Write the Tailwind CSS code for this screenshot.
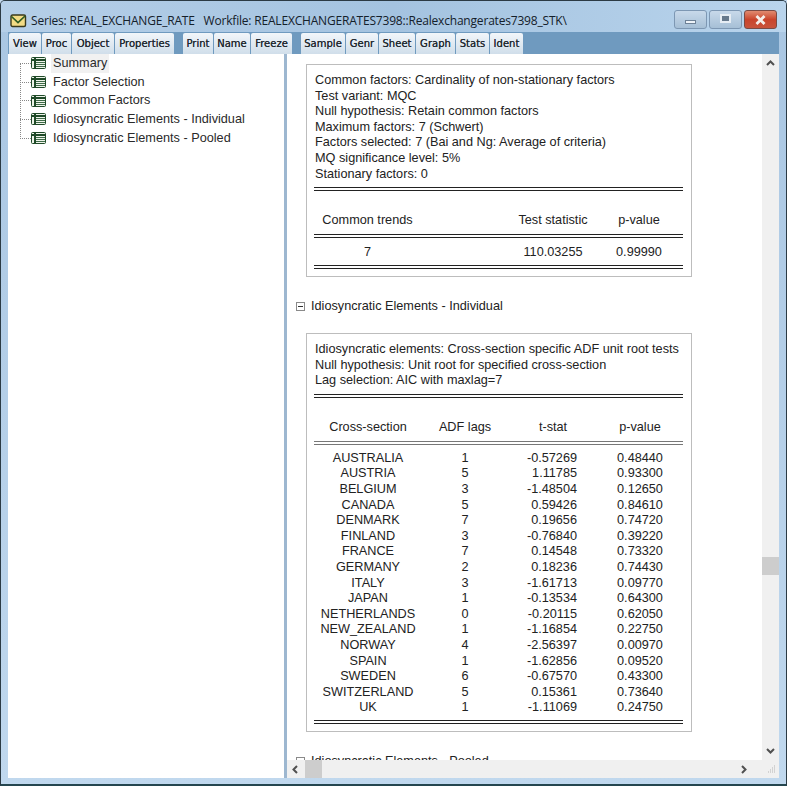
<!DOCTYPE html>
<html lang="en">
<head>
  <meta charset="UTF-8" />
  <title>Series: REAL_EXCHANGE_RATE</title>
  <script src="https://cdn.jsdelivr.net/npm/@tailwindcss/browser@4"></script>
</head>
<body class="w-[787px] h-[786px] overflow-hidden bg-[#c3d9ee] font-['Liberation_Sans',sans-serif] text-[12.7px] text-[#222]">

  <!-- window -->
  <div class="w-[787px] h-[786px] flex flex-col border-t border-x border-[#2b3a44] border-b-2 border-b-[#25464f] rounded-t-[5px] bg-gradient-to-b from-[#a9c6e2] to-[#c0d8ee] overflow-hidden">

    <!-- title bar -->
    <div class="h-[31px] flex shrink-0 items-center pl-[9px] pr-[9px] bg-gradient-to-r from-[#b5cfe8] via-[#a4c3e0] to-[#b9d4ec]">
      <svg width="17" height="14" viewBox="0 0 17 14" class="shrink-0 mt-[9px]">
        <rect x="1" y="1" width="14.500" height="11.500" rx="1.500" fill="#f3dc85" stroke="#3a3a1c" stroke-width="1.400"/>
        <path d="M1.500 2.500L8 8.500 15 2" fill="none" stroke="#2f5c23" stroke-width="1.700"/>
      </svg>
      <div class="ml-[4px] mt-[9px] font-['Open_Sans',sans-serif] text-[12px] tracking-[-0.19px] whitespace-pre text-[#14202a]">Series: REAL_EXCHANGE_RATE   Workfile: REALEXCHANGERATES7398::Realexchangerates7398_STK\</div>
      <div class="ml-auto flex mt-[6px] gap-[2px]">
        <div class="w-[33px] h-[19px] flex items-center justify-center rounded-[3px] border border-[#7d97b3] bg-gradient-to-b from-[#c8d9ea] to-[#a6bfd6]">
          <div class="w-[11px] h-[4px] mt-[5px] bg-[#eef3f8] border border-[#6d8196]"></div>
        </div>
        <div class="w-[33px] h-[19px] flex items-center justify-center rounded-[3px] border border-[#7d97b3] bg-gradient-to-b from-[#c8d9ea] to-[#a6bfd6]">
          <div class="w-[11px] h-[9px] mb-[2px] border-2 border-[#e6edf4] bg-[#66798c]"></div>
        </div>
        <div class="w-[33px] h-[19px] flex items-center justify-center rounded-[3px] border border-[#7a4a44] bg-gradient-to-b from-[#e08a70] via-[#c9442c] to-[#c8533c]">
          <svg width="13" height="10" viewBox="0 0 13 10"><path d="M2.500 1l8 8M10.500 1l-8 8" stroke="#f4efec" stroke-width="2.800"/></svg>
        </div>
      </div>
    </div>

    <!-- toolbar -->
    <div class="h-[22px] shrink-0 mx-[7px] bg-[#6f9abf] flex items-end gap-[1px] font-['DejaVu_Sans',sans-serif] text-[10px] tracking-[0.02px] text-[#1f2a33] leading-none [text-shadow:0_0_0.6px_#333] [&>span]:h-[21px] [&>span]:flex [&>span]:items-center [&>span]:justify-center [&>span]:rounded-t-[2px] [&>span]:bg-gradient-to-b [&>span]:from-[#f2f6fa] [&>span]:to-[#d0deea]">
      <span class="w-[32px] ml-[1px]">View</span>
      <span class="w-[29px]">Proc</span>
      <span class="w-[42px]">Object</span>
      <span class="w-[59px]">Properties</span>
      <span class="w-[30px] ml-[8px]">Print</span>
      <span class="w-[36px]">Name</span>
      <span class="w-[41px]">Freeze</span>
      <span class="w-[44px] ml-[8px]">Sample</span>
      <span class="w-[32px]">Genr</span>
      <span class="w-[36px]">Sheet</span>
      <span class="w-[39px]">Graph</span>
      <span class="w-[33px]">Stats</span>
      <span class="w-[33px]">Ident</span>
    </div>

    <!-- panes -->
    <div class="flex-1 min-h-0 flex mx-[7px] mb-[6px]">

      <!-- tree -->
      <div class="w-[279px] shrink-0 bg-white pl-[12px] border-r-[3px] border-[#9db7d0]">
        <div class="relative flex flex-col text-[#2a2a2a]">
          <div class="absolute left-0 top-[10px] h-[75px] border-l border-dotted border-[#888]"></div>
          <div class="h-[18.7px] flex items-center"><span class="w-[11px] border-t border-dotted border-[#888]"></span><svg width="15" height="12" viewBox="0 0 15 12"><rect x="0.500" y="0.500" width="14" height="11" rx="1" fill="#eef4ea" stroke="#1f4a28"/><path d="M0 3h15" stroke="#1f4a28" stroke-width="2"/><path d="M4 0v12" stroke="#1f4a28" stroke-width="2"/><path d="M5 5.500h9M5 7.500h9M5 9.500h9" stroke="#3f6b48"/></svg><span class="ml-[5px] px-[2px] bg-[#f1f1f1]">Summary</span></div>
          <div class="h-[18.7px] flex items-center"><span class="w-[11px] border-t border-dotted border-[#888]"></span><svg width="15" height="12" viewBox="0 0 15 12"><rect x="0.500" y="0.500" width="14" height="11" rx="1" fill="#eef4ea" stroke="#1f4a28"/><path d="M0 3h15" stroke="#1f4a28" stroke-width="2"/><path d="M4 0v12" stroke="#1f4a28" stroke-width="2"/><path d="M5 5.500h9M5 7.500h9M5 9.500h9" stroke="#3f6b48"/></svg><span class="ml-[7px]">Factor Selection</span></div>
          <div class="h-[18.7px] flex items-center"><span class="w-[11px] border-t border-dotted border-[#888]"></span><svg width="15" height="12" viewBox="0 0 15 12"><rect x="0.500" y="0.500" width="14" height="11" rx="1" fill="#eef4ea" stroke="#1f4a28"/><path d="M0 3h15" stroke="#1f4a28" stroke-width="2"/><path d="M4 0v12" stroke="#1f4a28" stroke-width="2"/><path d="M5 5.500h9M5 7.500h9M5 9.500h9" stroke="#3f6b48"/></svg><span class="ml-[7px]">Common Factors</span></div>
          <div class="h-[18.7px] flex items-center"><span class="w-[11px] border-t border-dotted border-[#888]"></span><svg width="15" height="12" viewBox="0 0 15 12"><rect x="0.500" y="0.500" width="14" height="11" rx="1" fill="#eef4ea" stroke="#1f4a28"/><path d="M0 3h15" stroke="#1f4a28" stroke-width="2"/><path d="M4 0v12" stroke="#1f4a28" stroke-width="2"/><path d="M5 5.500h9M5 7.500h9M5 9.500h9" stroke="#3f6b48"/></svg><span class="ml-[7px]">Idiosyncratic Elements - Individual</span></div>
          <div class="h-[18.7px] flex items-center"><span class="w-[11px] border-t border-dotted border-[#888]"></span><svg width="15" height="12" viewBox="0 0 15 12"><rect x="0.500" y="0.500" width="14" height="11" rx="1" fill="#eef4ea" stroke="#1f4a28"/><path d="M0 3h15" stroke="#1f4a28" stroke-width="2"/><path d="M4 0v12" stroke="#1f4a28" stroke-width="2"/><path d="M5 5.500h9M5 7.500h9M5 9.500h9" stroke="#3f6b48"/></svg><span class="ml-[7px]">Idiosyncratic Elements - Pooled</span></div>
        </div>
      </div>

      <!-- report -->
      <div class="flex-1 min-w-0 bg-white flex flex-col">
        <div class="flex-1 min-h-0 flex">
          <div class="flex-1 min-w-0 overflow-hidden pl-[19px] pt-[10px]">

            <div class="w-[386px] h-[213px] border border-[#bdbdbd] pl-[7px] pr-[8px] pt-[8px] leading-[15.6px]">
              <div class="pl-[1px]">Common factors: Cardinality of non-stationary factors</div>
              <div class="pl-[1px]">Test variant: MQC</div>
              <div class="pl-[1px]">Null hypothesis: Retain common factors</div>
              <div class="pl-[1px]">Maximum factors: 7 (Schwert)</div>
              <div class="pl-[1px]">Factors selected: 7 (Bai and Ng: Average of criteria)</div>
              <div class="pl-[1px]">MQ significance level: 5%</div>
              <div class="pl-[1px]">Stationary factors: 0</div>
              <div class="h-[4px] mt-[5px] border-y border-[#222]"></div>
              <div class="flex mt-[22px] h-[16px] items-center">
                <div class="w-[107px] text-center">Common trends</div>
                <div class="w-[100px] ml-[82px] text-center">Test statistic</div>
                <div class="w-[72px] text-center">p-value</div>
              </div>
              <div class="h-[4px] mt-[5px] border-y border-[#222]"></div>
              <div class="flex mt-[7px] h-[16px] items-center">
                <div class="w-[107px] text-center">7</div>
                <div class="w-[100px] ml-[82px] text-center">110.03255</div>
                <div class="w-[72px] text-center">0.99990</div>
              </div>
              <div class="h-[4px] mt-[4px] border-y border-[#222]"></div>
            </div>

            <div class="flex items-center h-[16px] mt-[21px] -ml-[10px]">
              <svg width="9" height="9" viewBox="0 0 9 9" class="shrink-0"><rect x="0.500" y="0.500" width="8" height="8" fill="#fff" stroke="#8a8a8a"/><path d="M2 4.500h5" stroke="#333"/></svg>
              <span class="ml-[6px] pt-[2px]">Idiosyncratic Elements - Individual</span>
            </div>

            <div class="w-[386px] h-[399px] mt-[19px] border border-[#bdbdbd] pl-[7px] pr-[8px] pt-[8px] leading-[15.6px]">
              <div class="pl-[1px] whitespace-nowrap">Idiosyncratic elements: Cross-section specific ADF unit root tests</div>
              <div class="pl-[1px]">Null hypothesis: Unit root for specified cross-section</div>
              <div class="pl-[1px]">Lag selection: AIC with maxlag=7</div>
              <div class="h-[4px] mt-[5px] border-y border-[#222]"></div>
              <div class="flex mt-[22px] h-[16px] items-center">
                <div class="w-[108px] text-center">Cross-section</div>
                <div class="w-[86px] text-center">ADF lags</div>
                <div class="w-[90px] text-center">t-stat</div>
                <div class="w-[84px] text-center">p-value</div>
              </div>
              <div class="h-[4px] mt-[5px] border-y border-[#777]"></div>
              <table class="mt-[6px] w-[368px] table-fixed border-collapse text-center [&_td]:p-0 [&_td]:h-[15.6px] [&_td]:leading-[15.6px] [&_td:nth-child(3)]:text-right [&_td:nth-child(3)]:pr-[21px]">
                <colgroup><col class="w-[108px]"><col class="w-[86px]"><col class="w-[90px]"><col class="w-[84px]"></colgroup>
                <tbody>
                  <tr><td>AUSTRALIA</td><td>1</td><td>-0.57269</td><td>0.48440</td></tr>
                  <tr><td>AUSTRIA</td><td>5</td><td>1.11785</td><td>0.93300</td></tr>
                  <tr><td>BELGIUM</td><td>3</td><td>-1.48504</td><td>0.12650</td></tr>
                  <tr><td>CANADA</td><td>5</td><td>0.59426</td><td>0.84610</td></tr>
                  <tr><td>DENMARK</td><td>7</td><td>0.19656</td><td>0.74720</td></tr>
                  <tr><td>FINLAND</td><td>3</td><td>-0.76840</td><td>0.39220</td></tr>
                  <tr><td>FRANCE</td><td>7</td><td>0.14548</td><td>0.73320</td></tr>
                  <tr><td>GERMANY</td><td>2</td><td>0.18236</td><td>0.74430</td></tr>
                  <tr><td>ITALY</td><td>3</td><td>-1.61713</td><td>0.09770</td></tr>
                  <tr><td>JAPAN</td><td>1</td><td>-0.13534</td><td>0.64300</td></tr>
                  <tr><td>NETHERLANDS</td><td>0</td><td>-0.20115</td><td>0.62050</td></tr>
                  <tr><td>NEW_ZEALAND</td><td>1</td><td>-1.16854</td><td>0.22750</td></tr>
                  <tr><td>NORWAY</td><td>4</td><td>-2.56397</td><td>0.00970</td></tr>
                  <tr><td>SPAIN</td><td>1</td><td>-1.62856</td><td>0.09520</td></tr>
                  <tr><td>SWEDEN</td><td>6</td><td>-0.67570</td><td>0.43300</td></tr>
                  <tr><td>SWITZERLAND</td><td>5</td><td>0.15361</td><td>0.73640</td></tr>
                  <tr><td>UK</td><td>1</td><td>-1.11069</td><td>0.24750</td></tr>
                </tbody>
              </table>
              <div class="h-[4px] mt-[4px] border-y border-[#222]"></div>
            </div>

            <div class="flex items-center h-[16px] mt-[21px] -ml-[10px]">
              <svg width="9" height="9" viewBox="0 0 9 9" class="shrink-0"><rect x="0.500" y="0.500" width="8" height="8" fill="#fff" stroke="#8a8a8a"/><path d="M2 4.500h5" stroke="#333"/></svg>
              <span class="ml-[6px] pt-[2px]">Idiosyncratic Elements - Pooled</span>
            </div>
          </div>

          <!-- vertical scrollbar -->
          <div class="w-[17px] shrink-0 bg-[#f0f0f0] flex flex-col items-center">
            <svg width="9" height="6" viewBox="0 0 9 6" class="mt-[6px]"><path d="M1 5l3.500-3.500L8 5" fill="none" stroke="#505050" stroke-width="2"/></svg>
            <div class="w-[17px] h-[18px] mt-[491px] bg-[#cdcdcd]"></div>
            <svg width="9" height="6" viewBox="0 0 9 6" class="mt-auto mb-[6px]"><path d="M1 1l3.500 3.500L8 1" fill="none" stroke="#505050" stroke-width="2"/></svg>
          </div>
        </div>

        <!-- horizontal scrollbar -->
        <div class="h-[18px] shrink-0 bg-[#f0f0f0] flex items-center">
          <svg width="6" height="9" viewBox="0 0 6 9" class="ml-[5px]"><path d="M5 1L1.500 4.500 5 8" fill="none" stroke="#505050" stroke-width="2"/></svg>
          <div class="w-[17px] h-[18px] ml-[7px] bg-[#cdcdcd]"></div>
          <svg width="6" height="9" viewBox="0 0 6 9" class="ml-auto mr-[21px]"><path d="M1 1l3.500 3.500L1 8" fill="none" stroke="#505050" stroke-width="2"/></svg>
          <svg width="8" height="8" viewBox="0 0 8 8" class="mr-[3px]"><path d="M6 1h1M4 3h1M6 3h1M2 5h1M4 5h1M6 5h1M0 7h1M2 7h1M4 7h1M6 7h1" stroke="#b5b5b5"/></svg>
        </div>
      </div>
    </div>
  </div>
</body>
</html>
